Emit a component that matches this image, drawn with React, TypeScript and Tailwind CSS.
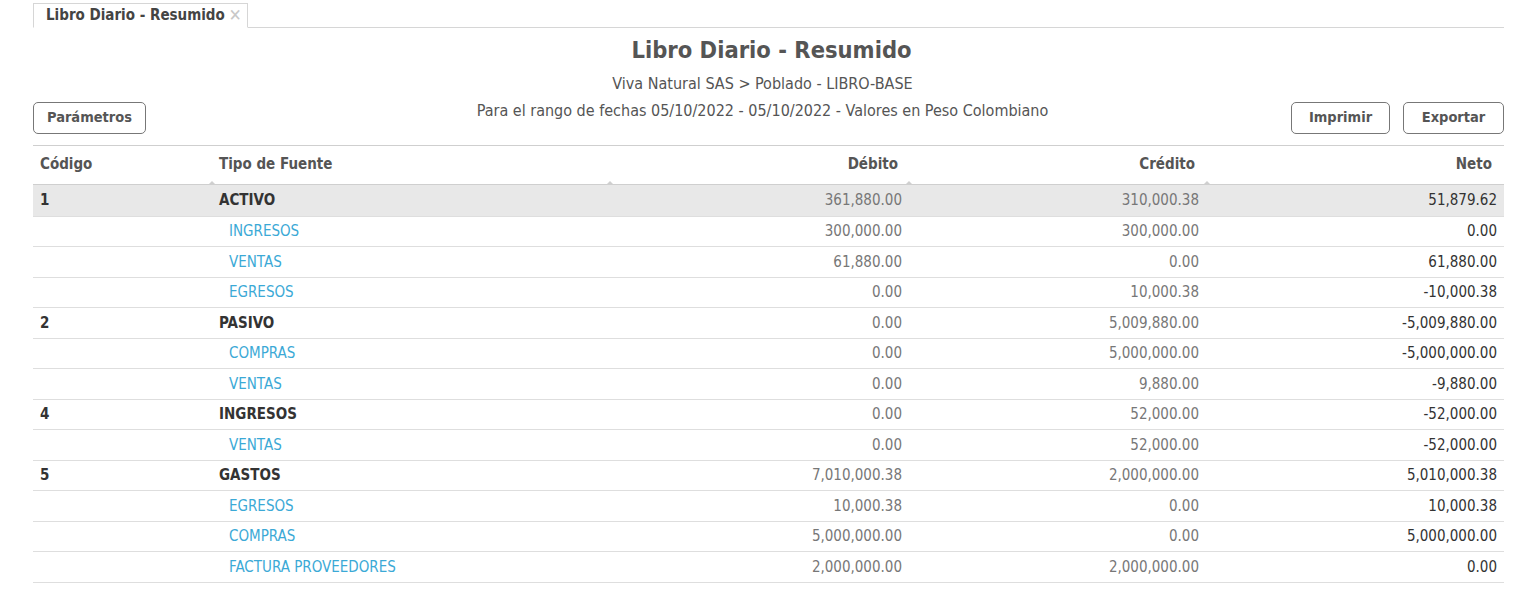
type Row = { code?: string; name: string; debit: string; credit: string; net: string; group?: boolean };

const rows: Row[] = [
  { code: "1", name: "ACTIVO", debit: "361,880.00", credit: "310,000.38", net: "51,879.62", group: true },
  { name: "INGRESOS", debit: "300,000.00", credit: "300,000.00", net: "0.00" },
  { name: "VENTAS", debit: "61,880.00", credit: "0.00", net: "61,880.00" },
  { name: "EGRESOS", debit: "0.00", credit: "10,000.38", net: "-10,000.38" },
  { code: "2", name: "PASIVO", debit: "0.00", credit: "5,009,880.00", net: "-5,009,880.00", group: true },
  { name: "COMPRAS", debit: "0.00", credit: "5,000,000.00", net: "-5,000,000.00" },
  { name: "VENTAS", debit: "0.00", credit: "9,880.00", net: "-9,880.00" },
  { code: "4", name: "INGRESOS", debit: "0.00", credit: "52,000.00", net: "-52,000.00", group: true },
  { name: "VENTAS", debit: "0.00", credit: "52,000.00", net: "-52,000.00" },
  { code: "5", name: "GASTOS", debit: "7,010,000.38", credit: "2,000,000.00", net: "5,010,000.38", group: true },
  { name: "EGRESOS", debit: "10,000.38", credit: "0.00", net: "10,000.38" },
  { name: "COMPRAS", debit: "5,000,000.00", credit: "0.00", net: "5,000,000.00" },
  { name: "FACTURA PROVEEDORES", debit: "2,000,000.00", credit: "2,000,000.00", net: "0.00" },
];

const font = { fontFamily: '"DejaVu Sans Condensed", "DejaVu Sans", sans-serif' };

const Caret = () => (
  <span className="absolute -bottom-[1px] right-[-4px] w-0 h-0 border-l-[4px] border-r-[4px] border-b-[4px] border-l-transparent border-r-transparent border-b-[#cfcfcf]" />
);

export default function App() {
  return (
    <div className="min-h-screen bg-white text-[#555] text-[15px] pl-[33px] pr-[27px] pt-[3px]" style={font}>
      {/* pestaña */}
      <div className="flex border-b border-[#d6d6d6]">
        <div className="h-[25px] -mb-px flex items-center gap-[4px] pl-[12px] pr-[5px] border border-[#d6d6d6] border-b-white bg-white font-bold text-[#444]">
          Libro Diario - Resumido
          <span className="text-[#c8c8c8] text-[17px] font-normal leading-none">✕</span>
        </div>
      </div>

      <div>
        <h1 className="text-center text-[23.5px] font-bold text-[#555] leading-none pt-[11px] pl-[6px]">Libro Diario - Resumido</h1>
        <div className="text-center text-[16px] text-[#555] mt-[12px] leading-[18px] pr-[12px]">Viva Natural SAS &gt; Poblado - LIBRO-BASE</div>
        <div className="grid grid-cols-[1fr_auto_1fr] items-start">
          <div>
            <button className="mt-[9px] h-[32px] w-[113px] rounded-[5px] border border-[#777] font-bold text-[#555] text-[14.5px]">
              Parámetros
            </button>
          </div>
          <div className="text-[#555] text-[16px] leading-[18px] mt-[9px] mr-[12px]">
            Para el rango de fechas 05/10/2022 - 05/10/2022 - Valores en Peso Colombiano
          </div>
          <div className="flex justify-end gap-[13px] mt-[9px]">
            <button className="h-[32px] w-[99px] rounded-[5px] border border-[#777] font-bold text-[#555] text-[14.5px]">Imprimir</button>
            <button className="h-[32px] w-[101px] rounded-[5px] border border-[#777] font-bold text-[#555] text-[14.5px]">Exportar</button>
          </div>
        </div>
      </div>

      {/* tabla */}
      <div className="mt-[11px] border-t border-[#cfcfcf]">
        <div className="grid grid-cols-[179px_398px_299px_298px_297px] h-[39px] items-center border-b border-[#cfcfcf] font-bold text-[#555]">
          <div className="relative h-full flex items-center pl-[7px]">Código<Caret /></div>
          <div className="relative h-full flex items-center pl-[7px]">Tipo de Fuente<Caret /></div>
          <div className="relative h-full flex items-center justify-end pr-[11px]">Débito<Caret /></div>
          <div className="relative h-full flex items-center justify-end pr-[12px]">Crédito<Caret /></div>
          <div className="h-full flex items-center justify-end pr-[12px]">Neto</div>
        </div>
        {rows.map((r, i) => (
          <div
            key={i}
            className={`grid grid-cols-[179px_398px_299px_298px_297px] items-center border-b border-[#dedede] ${
              i === 0 ? "h-[32px] bg-[#e8e8e8]" : "h-[30.5px] bg-white"
            }`}
          >
            <div className="pl-[7px] font-bold text-[#333]">{r.code}</div>
            <div className={r.group ? "pl-[7px] font-bold text-[#333]" : "pl-[17px] text-[#3ba9d6]"}>{r.name}</div>
            <div className="text-right pr-[7px] text-[#777]">{r.debit}</div>
            <div className="text-right pr-[8px] text-[#777]">{r.credit}</div>
            <div className="text-right pr-[7px] text-[#333]">{r.net}</div>
          </div>
        ))}
      </div>
    </div>
  );
}
